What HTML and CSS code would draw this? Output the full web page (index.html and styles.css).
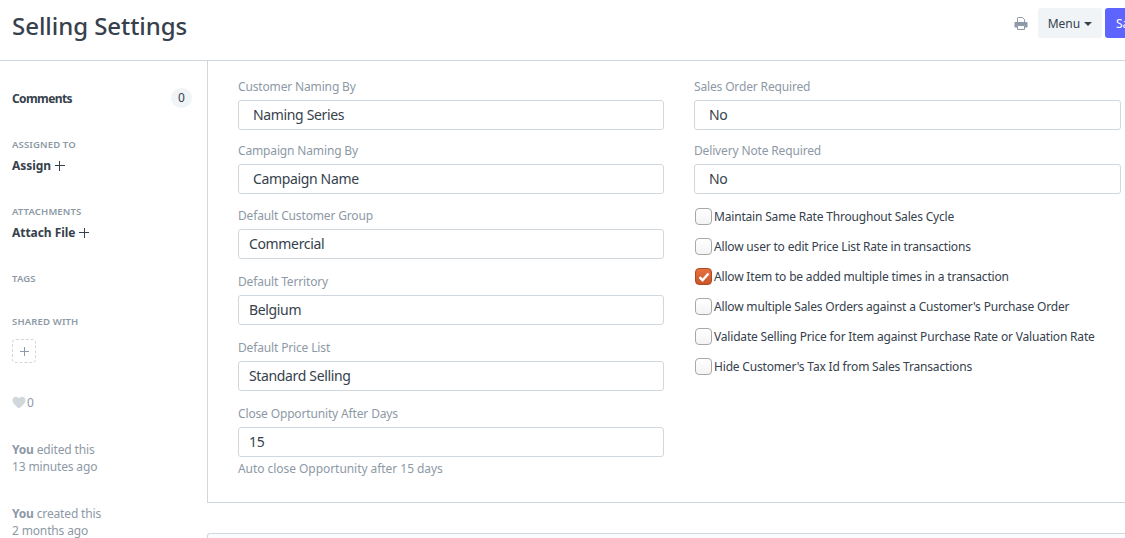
FILE: index.html
```html
<!DOCTYPE html>
<html lang="en">
<head>
<meta charset="utf-8">
<title>Selling Settings</title>
<link rel="stylesheet" href="styles.css">
</head>
<body>
<header class="page-head">
  <h1 class="title">Selling Settings</h1>
  <div class="actions">
    <svg class="print" width="14" height="13" viewBox="0 0 14 13"><path d="M3.500 5V1.200C3.500.800 3.800.500 4.200.500h4.300L10.500 2.500V5" fill="#fff" stroke="#8d99a6"/><path d="M1.500 5h11c.6 0 1 .4 1 1v3.500c0 .6-.4 1-1 1H11V8H3v2.500H1.500c-.6 0-1-.4-1-1V6c0-.6.4-1 1-1z" fill="#8d99a6"/><path d="M3.500 8.500h7v4h-7z" fill="#fff" stroke="#8d99a6"/></svg>
    <button class="btn btn-menu">Menu <span class="caret"></span></button>
    <button class="btn btn-save">Save</button>
  </div>
</header>
<div class="layout">
  <aside class="sidebar">
    <div class="comments"><b>Comments</b><span class="count">0</span></div>
    <div class="side-label first">ASSIGNED TO</div>
    <div class="side-link">Assign <span class="plus"></span></div>
    <div class="side-label">ATTACHMENTS</div>
    <div class="side-link">Attach File <span class="plus"></span></div>
    <div class="side-label tags">TAGS</div>
    <div class="side-label shared">SHARED WITH</div>
    <div class="share-add"><span class="plus light"></span></div>
    <div class="likes"><svg width="14" height="13" viewBox="0 0 14 13"><path d="M7 12.500C5 10.700.5 7.800.5 4.200.5 2 2 .7 3.800.7 5.200.7 6.300 1.400 7 2.600 7.700 1.400 8.800.7 10.200.7 12 .7 13.500 2 13.500 4.200c0 3.600-4.500 6.500-6.500 8.300z" fill="#d1d8dd"/></svg><span>0</span></div>
    <div class="activity"><b>You</b> edited this<br>13 minutes ago</div>
    <div class="activity created"><b>You</b> created this<br>2 months ago</div>
  </aside>
  <main class="content">
    <section class="form">
      <div class="col">
        <div class="field select"><label>Customer Naming By</label><div class="control pad">Naming Series</div></div>
        <div class="field select"><label>Campaign Naming By</label><div class="control pad">Campaign Name</div></div>
        <div class="field"><label>Default Customer Group</label><div class="control">Commercial</div></div>
        <div class="field"><label>Default Territory</label><div class="control">Belgium</div></div>
        <div class="field"><label>Default Price List</label><div class="control">Standard Selling</div></div>
        <div class="field last"><label>Close Opportunity After Days</label><div class="control">15</div><p class="help">Auto close Opportunity after 15 days</p></div>
      </div>
      <div class="col">
        <div class="field select"><label>Sales Order Required</label><div class="control pad">No</div></div>
        <div class="field select"><label>Delivery Note Required</label><div class="control pad">No</div></div>
        <ul class="checks">
          <li><span class="box"></span>Maintain Same Rate Throughout Sales Cycle</li>
          <li><span class="box"></span>Allow user to edit Price List Rate in transactions</li>
          <li><span class="box on"><svg width="12" height="10" viewBox="0 0 12 10"><path d="M1.500 5.200 4.500 8.200 10.500 1.500" fill="none" stroke="#fff" stroke-width="2.400"/></svg></span>Allow Item to be added multiple times in a transaction</li>
          <li><span class="box"></span>Allow multiple Sales Orders against a Customer's Purchase Order</li>
          <li><span class="box"></span>Validate Selling Price for Item against Purchase Rate or Valuation Rate</li>
          <li><span class="box"></span>Hide Customer's Tax Id from Sales Transactions</li>
        </ul>
      </div>
    </section>
    <section class="next"></section>
  </main>
</div>
</body>
</html>
```
FILE: styles.css
```css
* { box-sizing: border-box; }
html, body { margin: 0; height: 538px; overflow: hidden; background: #fff; }
body { font-family: "Noto Sans", "Open Sans", sans-serif; color: #36414c; font-size: 13px; width: 1125px; }

.page-head { height: 61px; border-bottom: 1px solid #d1d8dd; display: flex; align-items: flex-start; justify-content: space-between; position: relative; overflow: hidden; }
.title { margin: 9px 0 0 12px; font-size: 24px; line-height: 34px; font-weight: 500; color: #36414c; letter-spacing: -0.05px; }
.actions { display: flex; align-items: center; position: absolute; left: 1014px; top: 8px; height: 30px; }
.print { margin-right: 10px; flex: none; }
.btn { height: 30px; border: 0; border-radius: 3px; font: inherit; font-size: 12px; padding: 0; white-space: nowrap; }
.btn-menu { width: 64px; background: #f0f4f7; color: #36414c; margin-right: 3px; flex: none; }
.btn-save { width: 60px; flex: none; background: #5e64ff; color: #fff; text-align: left; padding-left: 11px; }
.caret { display: inline-block; border: 4px solid transparent; border-top-color: #36414c; border-bottom: 0; vertical-align: middle; margin-left: 1px; }

.layout { display: flex; height: 477px; }
.sidebar { width: 207px; flex: none; padding: 0 15px 0 12px; }
.comments { display: flex; justify-content: space-between; align-items: center; height: 22px; margin-top: 26px; }
.comments b { font-size: 12px; font-weight: 700; letter-spacing: -0.6px; }
.count { width: 21px; height: 20px; border-radius: 10px; background: #f0f4f7; text-align: center; font-size: 12px; line-height: 20px; }
.side-label { font-size: 9.500px; line-height: 14px; font-weight: 600; color: #8d99a6; margin-top: 30px; letter-spacing: 0.15px; }
.side-label.first { margin-top: 29px; }
.side-label.tags { margin-top: 30px; }
.side-label.shared { margin-top: 29px; }
.side-link { font-size: 12px; font-weight: 700; line-height: 18px; margin-top: 5px; display: flex; align-items: center; gap: 4px; letter-spacing: -0.05px; }
.plus { display: inline-block; width: 10px; height: 10px; background: linear-gradient(#36414c,#36414c) center/100% 1.300px no-repeat, linear-gradient(#36414c,#36414c) center/1.300px 100% no-repeat; }
.plus.light { width: 9px; height: 9px; background: linear-gradient(#8d99a6,#8d99a6) center/100% 1px no-repeat, linear-gradient(#8d99a6,#8d99a6) center/1px 100% no-repeat; }
.share-add { width: 24px; height: 24px; margin-top: 10px; border: 1px dashed #d1d8dd; border-radius: 4px; display: flex; align-items: center; justify-content: center; }
.likes { display: flex; align-items: center; gap: 1px; margin-top: 30px; height: 18px; font-size: 12px; color: #8d99a6; }
.activity { margin-top: 30px; font-size: 12px; line-height: 17px; color: #8d99a6; letter-spacing: -0.15px; }
.activity.created { margin-top: 30px; }
.activity b { font-weight: 700; }

.content { flex: 1; min-width: 0; }
.form { height: 442px; border-left: 1px solid #d1d8dd; border-bottom: 1px solid #d1d8dd; display: flex; padding: 17px 0 0 30px; gap: 30px; width: 918px; }
.col { width: 426px; flex: none; }
.col + .col { width: 427px; }
.field { margin-bottom: 14px; }
.field.select { margin-bottom: 12.400px; }
.field.last { margin-bottom: 0; }
label { display: block; font-size: 12px; line-height: 18px; color: #8d99a6; margin-bottom: 4px; white-space: nowrap; letter-spacing: -0.15px; }
.control { height: 30px; border: 1px solid #d1d8dd; border-radius: 3px; padding-left: 10px; font-size: 14px; line-height: 28px; color: #36414c; letter-spacing: -0.35px; }
.control.pad { padding-left: 14px; }
.help { margin: 4px 0 0; font-size: 12px; line-height: 16px; color: #8d99a6; letter-spacing: -0.05px; }
.checks { list-style: none; margin: -5px 0 0; padding: 0; }
.checks li { height: 30px; display: flex; align-items: center; font-size: 12px; white-space: nowrap; color: #36414c; letter-spacing: -0.18px; padding-bottom: 1px; }
.box { width: 17px; height: 17px; border: 1px solid #a8a8a8; border-radius: 4px; background: linear-gradient(#fff,#f4f4f4); margin: 1px 2px 0 1px; flex: none; display: flex; align-items: center; justify-content: center; }
.box.on { background: linear-gradient(#e8703e,#c9562a); border-color: #b04a23; }

.next { height: 30px; margin-top: 30px; border: 1px solid #d1d8dd; border-right: 0; border-bottom: 0; border-radius: 3px 0 0 0; background: #fafbfc; width: 918px; }
```
